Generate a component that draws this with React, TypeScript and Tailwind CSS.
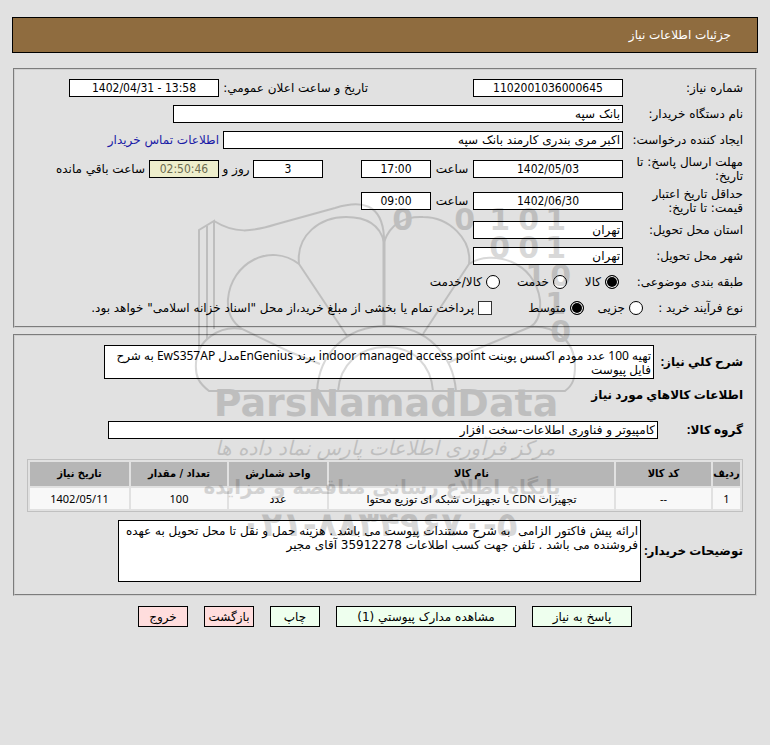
import type { ReactNode } from 'react'
import clsx from 'clsx'

const panel = 'mx-px border-2 [border-style:groove] border-[#d0d0d0]'
const box = 'h-[18px] border border-black bg-white px-[2px] leading-4'
const digits = "text-center font-['DejaVu_Sans_Condensed','DejaVu_Sans',sans-serif]"
const mixed = "font-['Noto_Sans','DejaVu_Sans',sans-serif]"

function Row({ label, htmlFor, tall, children }: { label: string; htmlFor?: string; tall?: boolean; children: ReactNode }) {
  return (
    <div className={clsx('flex items-center', tall ? 'h-8' : 'h-[26px]')}>
      <label htmlFor={htmlFor} className="w-[120px] shrink-0 leading-[14px]">{label}</label>
      {children}
    </div>
  )
}

function Field({ id, value, className, label }: { id?: string; value: string; className: string; label?: string }) {
  return <input id={id} aria-label={label} readOnly defaultValue={value} className={clsx(box, className)} />
}

function Radio({ name, label, checked, className }: { name: string; label: string; checked?: boolean; className?: string }) {
  return (
    <label className={clsx('flex shrink-0 items-center gap-1', className)}>
      <input
        type="radio"
        name={name}
        defaultChecked={checked}
        className="size-[14px] shrink-0 appearance-none rounded-full border border-black bg-white checked:bg-black checked:shadow-[inset_0_0_0_1px_white]"
      />
      {label}
    </label>
  )
}

function Watermark() {
  return (
    <svg
      viewBox="0 0 400 350"
      className="pointer-events-none absolute top-[195px] left-1/2 w-[400px] -translate-x-1/2 opacity-15"
      aria-hidden="true"
      direction="ltr"
    >
      <g fill="none" stroke="#000" strokeWidth="2">
        <path d="M14 155V35L29 26V134M22 144V31" />
        <path d="M29 26C50 39 66 37 92 29L150 13C176 5 197 8 199 42" />
        <path d="M199 47C195 30 181 22 161 22C135 22 111 40 114 69L162 141" />
        <path d="M199 47C205 29 220 21 238 22C264 22 287 44 284 69L238 139" />
        <path d="M199 42V131" strokeWidth="3" />
        <path d="M114 69C85 47 46 68 43 104C42 119 48 128 57 134L105 157L135 169" />
        <path d="M284 69C307 54 350 66 355 105C356 119 352 128 345 132L285 157L263 168" />
        <path d="M57 134C35 130 12 145 11 168C10 182 14 188 24 196H380C388 190 390 184 390 170C389 145 370 130 345 132" />
        <path d="M132 196C134 160 160 131 201 131C242 131 268 160 271 196" />
        <path d="M153 196C155 170 174 152 201 152C229 152 246 170 248 196" />
      </g>
      <g fontFamily="DejaVu Sans" fontWeight="bold" fontSize="30" textAnchor="end">
        <text x="228" y="35">0</text>
        <text x="290" y="35">0</text>
        <text x="325" y="35">1</text>
        <text x="354" y="35">0</text>
        <text x="381" y="35">1</text>
        <text x="325" y="63">0</text>
        <text x="354" y="63">0</text>
        <text x="381" y="63">1</text>
        <text x="361" y="91">1</text>
        <text x="386" y="91">0</text>
        <text x="381" y="119">1</text>
        <text x="386" y="147">0</text>
      </g>
      <g textAnchor="middle" fontFamily="DejaVu Sans">
        <text x="201" y="221" fontWeight="bold" fontSize="38">ParsNamadData</text>
        <text x="200" y="260" fontStyle="italic" fontSize="20">مرکز فرآوری اطلاعات پارس نماد داده ها</text>
        <text x="197" y="299" fontWeight="bold" fontSize="20">پایگاه اطلاع رسانی مناقصه و مزایده</text>
        <text x="194" y="341" fontWeight="bold" fontSize="34">۰۲۱-۸۸۳۴۹۶۷۰-۵</text>
      </g>
    </svg>
  )
}

const columns = [
  { title: 'رديف', width: 'w-[27px]', value: '1' },
  { title: 'کد کالا', width: 'w-[95px]', value: '--' },
  { title: 'نام کالا', width: '', value: 'تجهیزات CDN یا تجهیزات شبکه ای توزیع محتوا' },
  { title: 'واحد شمارش', width: 'w-[98px]', value: 'عدد' },
  { title: 'تعداد / مقدار', width: 'w-[96px]', value: '100' },
  { title: 'تاریخ نیاز', width: 'w-[99px]', value: '1402/05/11' },
]

const actions = [
  { text: 'پاسخ به نیاز', style: 'w-[100px] bg-[#eeffee]' },
  { text: 'مشاهده مدارک پیوستي (1)', style: 'w-[180px] bg-[#eeffee]' },
  { text: 'چاپ', style: 'w-[50px] bg-[#eeffee]' },
  { text: 'بازگشت', style: 'w-[50px] bg-[#ffdddd]' },
  { text: 'خروج', style: 'w-[50px] bg-[#ffdddd]' },
]

export default function App() {
  return (
    <div
      dir="rtl"
      className="relative min-h-screen bg-[#e1e1e1] px-3 pt-[17px] pb-6 font-['DejaVu_Sans',sans-serif] text-[12px] leading-[14px] text-black"
    >
      <header className="flex h-9 items-center border border-black bg-[#8f6c3f] px-[26px] text-white">
        <h1>جزئیات اطلاعات نیاز</h1>
      </header>

      <section className={clsx(panel, 'mt-[15px] px-3 py-[5px]')}>
        <Row label="شماره نیاز:" htmlFor="number">
          <Field id="number" value="1102001036000645" className={clsx(digits, 'w-[150px]')} />
          <label htmlFor="announced" className="mr-[105px] w-[149px] shrink-0 whitespace-nowrap">تاریخ و ساعت اعلان عمومي:</label>
          <Field id="announced" value="1402/04/31 - 13:58" className={clsx(digits, 'w-[150px] [direction:ltr]')} />
        </Row>
        <Row label="نام دستگاه خریدار:" htmlFor="buyer">
          <Field id="buyer" value="بانک سپه" className="w-[450px]" />
        </Row>
        <Row label="ایجاد کننده درخواست:" htmlFor="creator">
          <Field id="creator" value="اکبر مری بندری کارمند بانک سپه" className="w-[400px]" />
          <a href="#" className="mr-1 shrink-0 text-[#1a1aa6]">اطلاعات تماس خریدار</a>
        </Row>
        <Row label="مهلت ارسال پاسخ: تا تاریخ:" htmlFor="deadline" tall>
          <Field id="deadline" value="1402/05/03" className={clsx(digits, 'w-[150px]')} />
          <label htmlFor="deadline-time" className="w-[42px] text-center">ساعت</label>
          <Field id="deadline-time" value="17:00" className={clsx(digits, 'w-[70px]')} />
          <Field label="روز" value="3" className={clsx(digits, 'mr-[38px] w-[70px]')} />
          <label htmlFor="remaining" className="w-[34px] text-center whitespace-nowrap">روز و</label>
          <input
            id="remaining"
            readOnly
            defaultValue="02:50:46"
            className={clsx(digits, 'h-[18px] w-[70px] border border-black bg-[#eeeecc] leading-4 text-[#6b6b50]')}
          />
          <span className="mr-1 shrink-0">ساعت باقي مانده</span>
        </Row>
        <Row label="حداقل تاریخ اعتبار قیمت: تا تاریخ:" htmlFor="validity" tall>
          <Field id="validity" value="1402/06/30" className={clsx(digits, 'w-[150px]')} />
          <label htmlFor="validity-time" className="w-[42px] text-center">ساعت</label>
          <Field id="validity-time" value="09:00" className={clsx(digits, 'w-[70px]')} />
        </Row>
        <Row label="استان محل تحویل:" htmlFor="province">
          <Field id="province" value="تهران" className="w-[150px]" />
        </Row>
        <Row label="شهر محل تحویل:" htmlFor="city">
          <Field id="city" value="تهران" className="w-[150px]" />
        </Row>
        <div className="flex h-[26px] items-center">
          <span className="w-[124px] shrink-0">طبقه بندی موضوعی:</span>
          <Radio name="category" label="کالا" checked className="w-[52px]" />
          <Radio name="category" label="خدمت" className="w-[67px]" />
          <Radio name="category" label="کالا/خدمت" />
        </div>
        <div className="flex h-[26px] items-center">
          <span className="w-[100px] shrink-0">نوع فرآیند خرید :</span>
          <Radio name="process" label="جزیی" className="w-[59px]" />
          <Radio name="process" label="متوسط" checked className="w-[92px]" />
          <label className="flex items-center gap-1">
            <input
              type="checkbox"
              className="size-[14px] shrink-0 appearance-none border border-[#333] bg-white checked:bg-black"
            />
            پرداخت تمام یا بخشی از مبلغ خرید،از محل "اسناد خزانه اسلامی" خواهد بود.
          </label>
        </div>
      </section>

      <section className={clsx(panel, 'mt-[6px] px-3 pt-[9px] pb-3')}>
        <div className="flex items-center">
          <label htmlFor="summary" className={clsx(mixed, 'w-[89px] shrink-0 font-bold')}>شرح کلي نیاز:</label>
          <textarea
            id="summary"
            readOnly
            defaultValue="تهیه 100 عدد مودم اکسس پوینت indoor managed access point برند EnGeniusمدل EwS357AP به شرح فایل پیوست"
            className={clsx(mixed, 'h-[34px] w-[550px] resize-none overflow-hidden border border-black bg-white px-[2px] pt-[3px]')}
          />
        </div>
        <h2 className={clsx(mixed, 'mt-[9px] font-bold')}>اطلاعات کالاهاي مورد نیاز</h2>
        <div className="mt-[19px] flex items-center">
          <label htmlFor="group" className={clsx(mixed, 'w-[85px] shrink-0 font-bold')}>گروه کالا:</label>
          <Field id="group" value="کامپیوتر و فناوری اطلاعات-سخت افزار" className={clsx('w-[550px]')} />
        </div>

        <table className="mt-5 w-full table-fixed border-separate border-spacing-[2px] border border-[#c0c0c0] text-center text-[11px]">
          <thead className="font-['DejaVu_Sans_Condensed','DejaVu_Sans',sans-serif]">
            <tr>
              {columns.map((c) => (
                <th key={c.title} className={clsx('h-6 bg-[#b6b6b6] p-0 font-bold whitespace-nowrap', c.width)}>{c.title}</th>
              ))}
            </tr>
          </thead>
          <tbody className={mixed}>
            <tr>
              {columns.map((c) => (
                <td key={c.title} className="h-[21px] bg-[#f8f8f8] p-0 whitespace-nowrap">{c.value}</td>
              ))}
            </tr>
          </tbody>
        </table>

        <div className="mt-2 flex items-center">
          <label htmlFor="notes" className={clsx(mixed, 'w-[102px] shrink-0 font-bold whitespace-nowrap')}>توضیحات خریدار:</label>
          <textarea
            id="notes"
            readOnly
            defaultValue="ارائه پیش فاکتور الزامی  به شرح مستندات پیوست می باشد . هزینه حمل و نقل تا محل تحویل به عهده فروشنده می باشد . تلفن جهت کسب اطلاعات 35912278 آقای مجیر"
            className="h-[62px] w-[523px] resize-none overflow-hidden border border-black bg-white px-[2px] pt-[3px]"
          />
        </div>
      </section>

      <div className="mt-[10px] flex justify-center gap-4">
        {actions.map((a) => (
          <button key={a.text} type="button" className={clsx('h-[21px] border border-black whitespace-nowrap', a.style)}>
            {a.text}
          </button>
        ))}
      </div>

      <Watermark />
    </div>
  )
}
